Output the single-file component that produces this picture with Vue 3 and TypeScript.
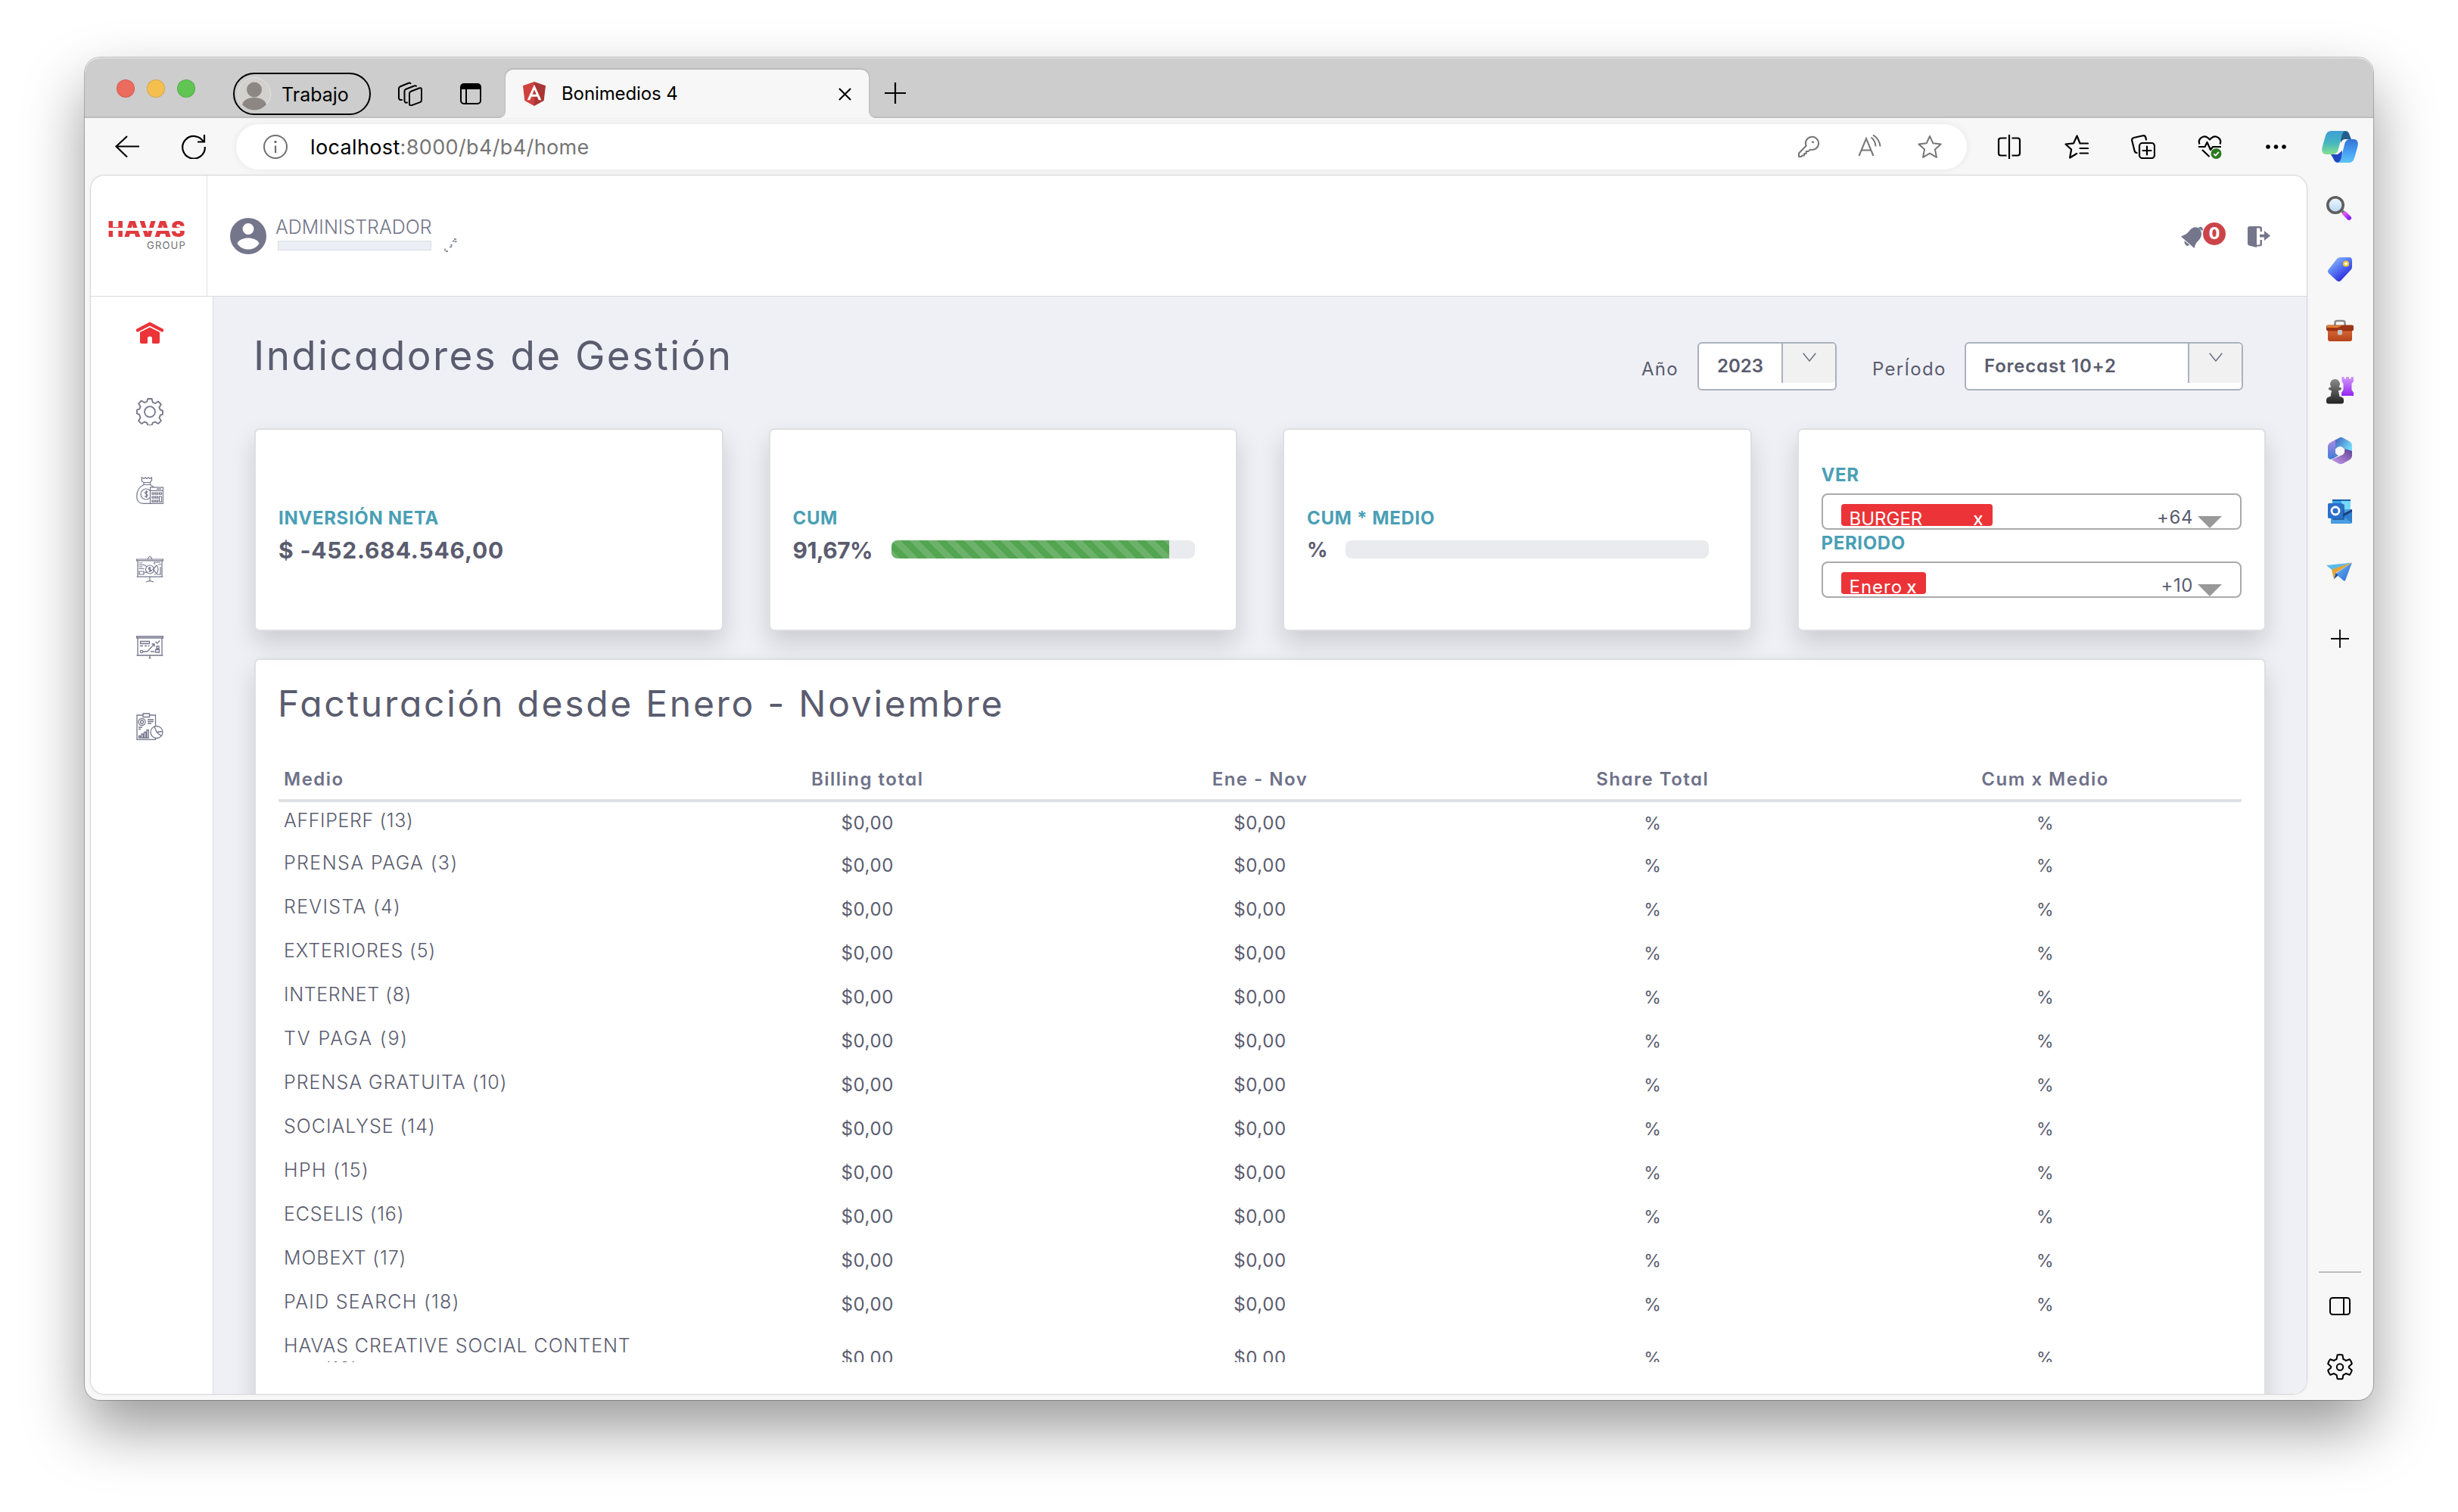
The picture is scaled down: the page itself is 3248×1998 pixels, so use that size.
<script setup lang="ts">
interface Medio {
  name: string
  tracking: number
  extra?: string
}

const medios: Medio[] = [
  { name: 'AFFIPERF (13)', tracking: 0.6 },
  { name: 'PRENSA PAGA (3)', tracking: 1.4 },
  { name: 'REVISTA (4)', tracking: 1.3 },
  { name: 'EXTERIORES (5)', tracking: 0.9 },
  { name: 'INTERNET (8)', tracking: 0.6 },
  { name: 'TV PAGA (9)', tracking: 1.9 },
  { name: 'PRENSA GRATUITA (10)', tracking: 1 },
  { name: 'SOCIALYSE (14)', tracking: 1 },
  { name: 'HPH (15)', tracking: 1.4 },
  { name: 'ECSELIS (16)', tracking: 0.8 },
  { name: 'MOBEXT (17)', tracking: 0.9 },
  { name: 'PAID SEARCH (18)', tracking: 1.3 },
  { name: 'HAVAS CREATIVE SOCIAL CONTENT', tracking: 0.9, extra: '(19)' },
]
const columns = ['Billing total', 'Ene - Nov', 'Share Total', 'Cum x Medio']
const cum = 91.67
</script>

<template>
  <div class="desktop">
    <div class="window">
      <!-- tab strip -->
      <header class="titlebar">
        <div class="lights"><i class="red"></i><i class="yellow"></i><i class="green"></i></div>
        <div class="profile">
          <svg class="profile-pic" viewBox="0 0 44 44">
            <circle cx="22" cy="22" r="21.5" fill="#d3d1cd" stroke="#e4e3e0" />
            <circle cx="22" cy="16.500" r="10" fill="#8c8782" />
            <path d="M6 36c2-6 8-9 16-9s14 3 16 9c-4 5-10 7.500-16 7.500S10 41 6 36Z" fill="#8c8782" />
          </svg>
          <span>Trabajo</span>
        </div>
        <svg class="ws" viewBox="0 0 32 32" fill="none" stroke="#000" stroke-width="2" stroke-linejoin="round" stroke-linecap="round">
          <path d="M15 15.500q0-2 2-2.800l11-4.200q3-1 3 1.800v14q0 2-2 2.800l-11 4q-3 1-3-1.800Z" />
          <path d="M12 27.500q-3.500 .8-3.500-2.500V12.500q0-2 2-2.800l11-4.200q1.500-.5 2.500.3" />
          <path d="M5 24q-4 .5-4-2.500V9q0-2 2-2.800l11-4.500q1.500-.5 2.500.5" />
        </svg>
        <svg class="tabact" viewBox="0 0 28 28">
          <rect x="1" y="1" width="26" height="26" rx="4" fill="none" stroke="#000" stroke-width="2" />
          <path d="M1 8V4q0-3 3-3h20q3 0 3 3v4Z" />
          <path d="M8 8v19" stroke="#000" stroke-width="2" />
        </svg>
        <div class="tab">
          <svg class="ng" viewBox="0 0 30 32">
            <path d="M15 0 0 5.300 2.300 25 15 32Z" fill="#d0413d" />
            <path d="M15 0l15 5.300L27.700 25 15 32Z" fill="#a83634" />
            <path d="M15 3.800 5.700 24.300h3.500l1.900-4.600h7.800l1.900 4.600h3.500Zm0 6.600 2.700 6.400h-5.400Z" fill="#fff" />
          </svg>
          <span class="tab-title">Bonimedios 4</span>
          <svg class="tab-x" viewBox="0 0 18 18" stroke="#000" stroke-width="2.200"><path d="M1 1l16 16M17 1 1 17" /></svg>
        </div>
        <svg class="newtab" viewBox="0 0 28 28" stroke="#000" stroke-width="2.200"><path d="M14 0v28M0 14h28" /></svg>
      </header>

      <!-- toolbar -->
      <div class="toolbar">
        <svg class="back" viewBox="0 0 32 32" fill="none" stroke="#000" stroke-width="2.200"><path d="M32 15.500H1.500M16 2 1.500 15.500 16 29.500" /></svg>
        <svg class="reload" viewBox="0 0 32 32" fill="none" stroke="#000" stroke-width="2.200"><path d="M29.200 10A14.800 14.800 0 1 0 30.800 16M30 0v9.500h-9" /></svg>
        <div class="address">
          <svg class="info" viewBox="0 0 32 32"><circle cx="16" cy="16" r="15" fill="none" stroke="#6f6f6f" stroke-width="2" /><path d="M16 14.500v9.500" stroke="#6f6f6f" stroke-width="2.200" /><circle cx="16" cy="9.500" r="1.700" fill="#6f6f6f" /></svg>
          <span class="url">localhost<em>:8000/b4/b4/home</em></span>
          <svg class="a-key" viewBox="0 0 32 32" fill="none" stroke="#767676" stroke-width="2" stroke-linejoin="round"><path d="M3 24.500 12.600 14.800A8.600 8.600 0 1 1 18 19.600l-2.300 2.300h-3v3h-2.600v2.600H7.500l-1.300 1.600H3Z" /><circle cx="21.500" cy="9.800" r="1.500" fill="#767676" stroke="none" /></svg>
          <svg class="a-read" viewBox="0 0 32 32" fill="none" stroke="#767676" stroke-width="2"><path d="M1.500 28 11 5l9.500 23M5 20.500h12M17.500 3.500q5.500 4 6 12M20 .5q8.500 5 9.500 15" /></svg>
          <svg class="a-star" viewBox="0 0 32 32" fill="none" stroke="#767676" stroke-width="2" stroke-linejoin="round"><path d="m16 1.800 4.300 9.500 10.300 1.200-7.700 6.900 2.100 10.400L16 24.700l-9 5.100 2.100-10.400-7.700-6.900 10.300-1.200Z" /></svg>
        </div>
        <div class="tools">
          <svg viewBox="0 0 32 32" fill="none" stroke="#000" stroke-width="2.200"><path d="M16 0v32M12.500 4.500H5q-3 0-3 3v17q0 3 3 3h7.500M19.500 4.500H27q3 0 3 3v17q0 3-3 3h-7.500" /></svg>
          <svg viewBox="0 0 32 32" fill="none" stroke="#000" stroke-width="2.200" stroke-linejoin="round" stroke-linecap="round"><path d="M20.500 11.500l-4-10-4.400 9.800L1.500 12.500l7.600 7-2 11 9-5.500M20.500 11.500H31M20.500 18H31M20.500 24.500H31" /></svg>
          <svg viewBox="0 0 32 32" fill="none" stroke="#000" stroke-width="2.200" stroke-linejoin="round" stroke-linecap="round"><rect x="11" y="11" width="20" height="20" rx="4" /><path d="M21 15.500v11M15.500 21h11M7.500 24q-2.500-.3-3-3L1.200 7.800q-.6-3 2.300-3.800l12-2.700q3-.5 3.800 2.300L20 6.500" /></svg>
          <svg viewBox="0 0 32 32" fill="none" stroke="#000" stroke-width="2.200" stroke-linejoin="round"><path d="M2.500 12.500C-.5 5 8-.5 14 4.500l2 2 2-2c6-5 14.500.5 11.500 8M1 16h8.500l3-6 4.500 10 3-4H31M6 20l9.500 9" /><circle cx="24.500" cy="25" r="7" fill="#2c7a1f" stroke="none" /><path d="m21.300 25.300 2.300 2.300 4.200-4.700" stroke="#fff" stroke-width="1.800" /></svg>
          <svg viewBox="0 0 32 32"><circle cx="5" cy="16" r="2.800" /><circle cx="15.500" cy="16" r="2.800" /><circle cx="26" cy="16" r="2.800" /></svg>
          <svg class="copilot" viewBox="0 0 48 42">
            <defs>
              <linearGradient id="cpA" x1="0" y1="0" x2="0" y2="1"><stop offset="0" stop-color="#3d9fd6" /><stop offset=".5" stop-color="#45b5c0" /><stop offset="1" stop-color="#86e08f" /></linearGradient>
              <linearGradient id="cpB" x1="0" y1="0" x2="0" y2="1"><stop offset="0" stop-color="#3272d6" /><stop offset=".6" stop-color="#49a4f4" /><stop offset="1" stop-color="#5fc4f0" /></linearGradient>
            </defs>
            <path d="M24 0h7c4 0 5 3 6 6l2 5h-8c-3 0-5 2-6 5Z" fill="#235f8c" />
            <path d="M12 31h9l6-5-1 16h-4c-4 0-6-3-7-6Z" fill="#1f49c4" />
            <path d="M12 0h20c-4 0-5 4-6 8l-4 16c-1 4-3 7-8 7H7C1 31-1 27 1 20L5 6q2-6 7-6Z" fill="url(#cpA)" />
            <path d="M36 42H20c4 0 5-4 6-8l4-16c1-4 3-7 7-7h5c5 0 7 4 5 11l-4 14q-2 6-7 6Z" fill="url(#cpB)" />
          </svg>
        </div>
      </div>

      <div class="body">
        <div class="page">
          <header class="top">
            <div class="logo">
              <span class="havas">HAVAS</span>
              <span class="group">GROUP</span>
            </div>
            <svg class="avatar" viewBox="0 0 48 48"><circle cx="24" cy="24" r="24" fill="#74768b" /><circle cx="24" cy="14.500" r="7.400" fill="#fff" /><path d="M9.500 33.500C12 28.500 18 26.500 24 26.500s12 2 14.500 7C35.500 39 30 41.500 24 41.500S12.500 39 9.500 33.500Z" fill="#fff" /></svg>
            <div class="who"><span>ADMINISTRADOR</span><i></i></div>
            <svg class="grip" viewBox="0 0 18 18" stroke="#8a8c9d" stroke-width="1.800" fill="none"><path d="M1 13.500v3.500h5M7 11.500l3.500-.5M8.500 8l2 2M11 4.500l3-2M13 1h4M14 4.500l2.500-.5" stroke-dasharray="3 1.500" /></svg>
            <div class="session">
              <svg class="bell" viewBox="0 0 30 30"><g fill="#74768b"><path d="M0 13.500C6 11 8 10 11 6 15 0 22 0 25 4s3 10-2 15c-4 4-4 5-5.500 10Z" /><path d="M4.500 19 11 24.500q-2 2.500-4.500 .5T4.500 19ZM23 2q3-2.500 5 0t0 4Z" /></g></svg>
              <b class="badge">0</b>
              <svg class="exit" viewBox="0 0 30 28"><path d="M0 2.500Q0 0 3 0h12.500Q19 0 19 3v4h-2.500V3.500q0-1-1-1H12V24.500h3.500q1 0 1-1V18H19v6q0 2.500-3.500 2.500H12V28L2 25.500Q0 25 0 23ZM16 10.800h6V6l8 6.500-8 6.500v-4.500h-6Z" fill="#74768b" /></svg>
            </div>
          </header>

          <div class="below">
            <nav class="nav">
              <svg viewBox="0 0 36 36"><path d="M18 3.500 36 13v3l-2 .8L18 8.500 2 16.800 0 16v-3Z" fill="#eb3338" /><path d="M18 10.500 31 17v13q0 2-2 2h-6.500q-1.500 0-1.500-1.500V25q0-2.500-3-2.500T15 25v5.500q0 1.500-1.500 1.500H7q-2 0-2-2V17Z" fill="#eb3338" /></svg>
              <svg viewBox="0 0 36 36" fill="none" stroke="#74768b" stroke-width="1.800" stroke-linejoin="round"><path d="M15.300 1h5.400l1 4.600 3.400 1.400 4-2.500 3.800 3.800-2.500 4 1.400 3.400 3.200 1v5l-3.200 1-1.400 3.400 2.500 4-3.800 3.800-4-2.500-3.400 1.400-1 3.200h-5.400l-1-3.200-3.400-1.400-4 2.500-3.800-3.800 2.500-4L4.200 21.700 1 20.700v-5l3.200-1 1.400-3.400-2.500-4 3.800-3.800 4 2.500 3.400-1.400Z" /><circle cx="18" cy="18.200" r="7" /></svg>
              <svg viewBox="0 0 36 36" fill="none" stroke="#74768b" stroke-width="1.200"><path d="M8 1l-1 0 .5 5 2.500 1.500h8L20.500 5V1l-2.500 1.500L16 1l-2 1.500L12 1l-2 1.500ZM10 7.500v3h8.500v-3M10 10.500C3 14 .7 20 .7 26c0 6 3 9.300 9 9.300h9M18.500 10.500l5 3.500" /><circle cx="13" cy="23" r="7" /><rect x="18.500" y="14" width="17" height="21.400" fill="#fff" /><path d="M18.500 18.300h17M27 16.200h6" /><path d="M21 21h3v2.200h-3ZM25.700 21h3v2.200h-3ZM30.500 21h3v2.200h-3ZM21 26h3v2.200h-3ZM25.700 26h3v2.200h-3ZM21 31h3v2.200h-3ZM25.700 31h3v2.200h-3ZM30.500 26h3v7.200h-3Z" /><path d="M15.500 20.500q-1.500-1.300-3-.7-1.800 1 0 2.800 3 .6 2.500 2.600-1.500 2-4 .3M13.500 18v10" /></svg>
              <svg viewBox="0 0 36 36" fill="none" stroke="#74768b" stroke-width="1.200"><path d="M.6 5h34.800v1.800H.6ZM2 7v21M34 7v21M.6 28.200h34.800M15 5q3-7 6 0M18 28.500v6M13 35.200q5-3 10 0" /><circle cx="18" cy="18.500" r="5.500" /><path d="M19.500 16.500q-3-1-3 .8t3 2-3 2M18 15v7M3.500 10h5M3.500 12.500h7M3.500 15h5M3.500 17.500h7M4 21h6v4H4ZM10 12.500l4 2M11 23l4-1.500M22 18.500l5-5.500q4 5 0 11ZM24 12V9h8M29 12h4M32 15v10h-5M24 25h2" /></svg>
              <svg viewBox="0 0 36 36" fill="none" stroke="#74768b" stroke-width="1.300"><path d="M.6 3h34.800v2H.6ZM2 5v22.500M34 5v22.500M.6 28h34.800M18 28v2.500M16.500 31.500h3" /><path d="M5.500 9.500h12v3h-12ZM5 15.500h4M11 15.500h3M15.500 15.500h2" /><circle cx="7" cy="23" r="1.700" /><path d="M9 23h5.500L24 13M20.500 13H24v3.500M25.500 10l2.200 2 3.500-3.500M19 23h5M27 16h3v3h-3ZM25.500 20.500h5V24h-5Z" /></svg>
              <svg viewBox="0 0 36 36" fill="none" stroke="#74768b" stroke-width="1.300"><path d="M9 3H1v32.300h24.500V34M17 3h8.500v14M9 1h8.500v4.500H9Z" /><circle cx="7.500" cy="12" r="4.500" /><circle cx="7.500" cy="12" r="2" /><path d="M15 9h8M15 11.500h8M15 14h5M3 19h5M3 21.500h3M3.500 33v-2.500h2V33ZM7 33v-5h2.200v5ZM10.500 33v-7.500h2.200V33ZM14 33V22.500h2.200V33Z" /><circle cx="27" cy="25.500" r="8" /><path d="M27 25.500 24 18M27 25.500l7.500-1M27 25.500l6 5" /></svg>
            </nav>

            <main class="main">
              <div class="headline">
                <h1>Indicadores de Gestión</h1>
                <div class="filters">
                  <label>Año</label>
                  <div class="select year"><span class="sel-text">2023</span><span class="sel-btn"><svg viewBox="0 0 18 12" fill="none" stroke="#6c6f84" stroke-width="1.500"><path d="M.7.7 9 11 17.300.7" /></svg></span></div>
                  <label class="lp">PerÍodo</label>
                  <div class="select period"><span class="sel-text">Forecast 10+2</span><span class="sel-btn"><svg viewBox="0 0 18 12" fill="none" stroke="#6c6f84" stroke-width="1.500"><path d="M.7.7 9 11 17.300.7" /></svg></span></div>
                </div>
              </div>

              <div class="kpis">
                <section class="card kpi">
                  <h2>INVERSIÓN NETA</h2>
                  <div class="line"><strong>$ -452.684.546,00</strong></div>
                </section>
                <section class="card kpi">
                  <h2>CUM</h2>
                  <div class="line"><strong class="v-cum">91,67%</strong><div class="bar b-cum"><div class="fill" :style="{ width: cum + '%' }"></div></div></div>
                </section>
                <section class="card kpi">
                  <h2>CUM * MEDIO</h2>
                  <div class="line"><strong class="v-med">%</strong><div class="bar b-med"></div></div>
                </section>
                <section class="card picks">
                  <h2>VER</h2>
                  <div class="multi">
                    <div class="chip c-ver"><div class="chip-in"><span>BURGER</span><span class="x">x</span></div></div>
                    <span class="more">+64</span><i class="tri"></i>
                  </div>
                  <h2>PERIODO</h2>
                  <div class="multi">
                    <div class="chip c-per"><div class="chip-in"><span>Enero</span><span class="x">x</span></div></div>
                    <span class="more">+10</span><i class="tri"></i>
                  </div>
                </section>
              </div>

              <section class="card billing">
                <h1>Facturación desde Enero - Noviembre</h1>
                <div class="thead">
                  <div class="name">Medio</div>
                  <div v-for="c in columns" :key="c" class="num">{{ c }}</div>
                </div>
                <div class="tbody">
                  <div v-for="m in medios" :key="m.name" class="row">
                    <div class="name" :style="{ letterSpacing: m.tracking + 'px' }">{{ m.name }}<span v-if="m.extra" class="extra">{{ m.extra }}</span></div>
                    <div class="num">$0,00</div>
                    <div class="num">$0,00</div>
                    <div class="num pct">%</div>
                    <div class="num pct">%</div>
                  </div>
                </div>
              </section>
            </main>
          </div>
        </div>

        <!-- browser side bar -->
        <aside class="edge">
          <svg viewBox="0 0 40 40"><defs><linearGradient id="glass" x1="0" y1="0" x2="0" y2="1"><stop offset="0" stop-color="#f2f8fe" /><stop offset="1" stop-color="#b5d6f5" /></linearGradient><linearGradient id="hndl" x1="0" y1="0" x2="1" y2="1"><stop offset="0" stop-color="#e055e8" /><stop offset="1" stop-color="#8b22f5" /></linearGradient></defs><path d="m23 23 6 6" stroke="#6b6b6b" stroke-width="4" /><circle cx="14" cy="15" r="10.200" fill="url(#glass)" stroke="#5f5f5f" stroke-width="3.600" /><path d="m26.500 26.500 5.500 5.500" stroke="url(#hndl)" stroke-width="6" stroke-linecap="round" /></svg>
          <svg viewBox="0 0 40 40"><defs><linearGradient id="tg" x1=".2" y1=".1" x2=".8" y2=".9"><stop offset="0" stop-color="#86b4f8" /><stop offset=".5" stop-color="#4f6cf2" /><stop offset="1" stop-color="#2a20d8" /></linearGradient></defs><path d="M20 4h12q4 0 4 4v9q0 2-2 4L21 35q-2.500 2-5 0L5 25q-2-2.500 0-5L16 6q2-2 4-2Z" fill="url(#tg)" /><circle cx="28" cy="12.500" r="3" fill="#fff" stroke="#f3c72d" stroke-width="2.200" /></svg>
          <svg viewBox="0 0 40 40"><defs><linearGradient id="bf" x1="0" y1="0" x2="0" y2="1"><stop offset="0" stop-color="#d96a35" /><stop offset="1" stop-color="#b5431c" /></linearGradient></defs><path d="M13.500 14v-3.500q0-2.500 2.500-2.500h8q2.500 0 2.500 2.500V14" fill="none" stroke="#8a8a8a" stroke-width="2.600" /><path d="M4 19h32v13q0 3-3 3H7q-3 0-3-3Z" fill="url(#bf)" /><path d="M4 13.500h32q2 0 2 2V19q0 2.500-3 2.500H5Q2 21.500 2 19v-3.500q0-2 2-2Z" fill="#9c3516" /><path d="M3 14h20l-6 3H2.500Z" fill="#e08033" /><rect x="17" y="20" width="6" height="6.500" rx="1" fill="#c4c4c4" /></svg>
          <svg viewBox="0 0 40 40"><defs><linearGradient id="pawn" x1="0" y1="0" x2="0" y2="1"><stop offset="0" stop-color="#8b8b8b" /><stop offset="1" stop-color="#222" /></linearGradient><linearGradient id="rook" x1="0" y1="0" x2="0" y2="1"><stop offset="0" stop-color="#d29bfa" /><stop offset="1" stop-color="#9424f0" /></linearGradient></defs><path d="M22.500 2h3v2.500H28V2h4v2.500h2.500V2h3.500v6l-2.500 3v8l2.500 4v4H22v-4l2.500-4v-8L22.500 8Z" fill="url(#rook)" /><path d="M13.500 5a6.500 6.500 0 0 1 5 10.500q3.500 0 3.500 2t-4 2.500l1.500 8q5.500.5 5.500 4.500v2q0 3-3 3H5q-3 0-3-3v-2q0-4 5.500-4.500L9 20q-4-.5-4-2.500t3.500-2A6.500 6.500 0 0 1 13.500 5Z" fill="url(#pawn)" /></svg>
          <svg viewBox="0 0 40 40"><defs><linearGradient id="m1" x1="0" y1="0" x2="0" y2="1"><stop offset="0" stop-color="#b08be0" /><stop offset="1" stop-color="#3d7bd8" /></linearGradient><linearGradient id="m2" x1="0" y1="0" x2="1" y2=".6"><stop offset="0" stop-color="#4262bd" /><stop offset="1" stop-color="#74dcfb" /></linearGradient><linearGradient id="m3" x1="1" y1="0" x2="0" y2="1"><stop offset="0" stop-color="#5b4291" /><stop offset="1" stop-color="#cc9cee" /></linearGradient></defs><path d="M15 4.500 7 9q-3 2-3 5.500v12Q4 30 7 31l4-1 7-4-4-3V9Z" fill="url(#m1)" /><path d="M14 5.500 20 2q2-.6 4 .5l9 5q3 2 3 5.500V22l-10-4.500L21 14l-7 3Z" fill="url(#m2)" /><path d="M36 20v6.500q0 3-3 5l-9 5q-3 1.500-6 0L9 31.500l11-5 5.500-3.500 1-6Z" fill="url(#m3)" /><circle cx="20" cy="20" r="6" fill="#f7f7f7" /></svg>
          <svg viewBox="0 0 40 40"><rect x="10" y="4" width="24" height="18" rx="1.500" fill="#35a6e6" /><path d="M10 4h24v2H10Z" fill="#1d5fa6" /><rect x="22" y="6" width="12" height="11" fill="#76d8fb" /><path d="M8 17h28v17q0 2-2 2H8Z" fill="#4a9de0" /><path d="M36 18 24 26l12 9Z" fill="#2f7fd0" /><path d="M36 17v3l-12 7v-4Z" fill="#1a3f7c" /><path d="M10 10h14q2 0 2 2v19H10Z" fill="#134d8f" opacity=".7" /><rect x="4" y="9" width="20" height="20" rx="2" fill="#2a6fcc" /><circle cx="14" cy="19" r="5" fill="none" stroke="#fff" stroke-width="2.800" /></svg>
          <svg viewBox="0 0 40 40"><defs><linearGradient id="pl" x1="0" y1="0" x2="1" y2="1"><stop offset="0" stop-color="#6fc0ee" /><stop offset="1" stop-color="#2c63d8" /></linearGradient></defs><path d="M2 11 36 7.500 10 17.500Z" fill="#5bbcec" /><path d="m14 22 22-14.500L27 31q-1 1-2 .5Z" fill="url(#pl)" /><path d="M12 29.500 14 21l4 3Z" fill="#2450ad" /><path d="M36 7.500 9 16.500l3 13L14.500 21Z" fill="#e3a537" /></svg>
          <svg class="plus" viewBox="0 0 40 40" stroke="#000" stroke-width="1.800"><path d="M20 8v24M8 20h24" /></svg>
          <i class="rule"></i>
          <svg viewBox="0 0 40 40" fill="none" stroke="#000" stroke-width="2"><rect x="7" y="9" width="26" height="22" rx="3.500" /><path d="M25 9v22" /></svg>
          <svg viewBox="0 0 40 40" fill="none" stroke="#000" stroke-width="2" stroke-linejoin="round"><path d="M16.600 4.500q3.400-.8 6.800 0l1 5.500q2 .8 3.400 2l5-1.800q2.500 2.800 3 6l-4 3.500v1.600l4 3.500q-.8 3.400-3 6l-5-1.800q-1.500 1.200-3.400 2l-1 5q-3.400.6-6.800 0l-1-5q-1.900-.8-3.400-2l-5 1.800q-2.300-2.600-3-6l4-3.500v-1.600l-4-3.500q.7-3.200 3-6l5 1.800q1.400-1.200 3.400-2Z" /><circle cx="20" cy="20.500" r="4.200" /></svg>
        </aside>
      </div>
    </div>
  </div>
</template>

<style>
body { background: #fff; }
</style>

<style scoped>
* { box-sizing: border-box; }
h1, h2 { margin: 0; }
svg { display: block; flex: none; }
i { display: block; }
.desktop { width: 3248px; height: 1998px; padding: 76px 112px 0; overflow: hidden; background: #fff; font-family: Inter, "Open Sans", sans-serif; }
.window { width: 3024px; height: 1774px; border-radius: 20px; background: #f7f7f7; display: flex; flex-direction: column; box-shadow: 0 0 0 1px rgba(0,0,0,.24), 0 38px 80px rgba(0,0,0,.4); }

.titlebar { height: 80px; background: #cdcdcd; border-radius: 20px 20px 0 0; display: flex; align-items: flex-start; padding-left: 42px; box-shadow: inset 0 1px 0 #f1f1f1, inset 0 -3px 3px -2px rgba(0,0,0,.14); flex: none; }
.lights { display: flex; gap: 16px; margin-top: 29px; }
.lights i { width: 24px; height: 24px; border-radius: 50%; border: 1px solid rgba(0,0,0,.12); }
.red { background: #ed6a5e; }
.yellow { background: #f5bf4f; }
.green { background: #61c554; }
.profile { margin: 20px 0 0 50px; width: 182px; height: 56px; border: 2px solid #000; border-radius: 28px; display: flex; align-items: center; font-size: 25px; color: #000; padding-left: 4px; }
.profile-pic { width: 44px; height: 44px; margin-right: 14px; }
.profile span { padding-top: 1px; }
.ws { width: 32px; height: 32px; margin: 32px 0 0 36px; }
.tabact { width: 28px; height: 28px; margin: 34px 0 0 50px; }
.tab { position: relative; margin: 16px 0 0 32px; width: 480px; height: 64px; background: #f7f7f7; border-radius: 10px 10px 0 0; display: flex; align-items: center; padding-left: 23px; box-shadow: 0 -1px 3px rgba(0,0,0,.18); }
.tab::before, .tab::after { content: ""; position: absolute; bottom: 0; width: 8px; height: 8px; }
.tab::before { left: -8px; background: radial-gradient(circle at 0 0, transparent 7.500px, #f7f7f7 8px); }
.tab::after { right: -8px; background: radial-gradient(circle at 100% 0, transparent 7.500px, #f7f7f7 8px); }
.ng { width: 30px; height: 32px; }
.tab-title { font-size: 24px; line-height: 30px; margin-left: 21px; width: 366px; letter-spacing: -.1px; white-space: nowrap; }
.tab-x { width: 17px; height: 17px; margin-top: 1px; }
.newtab { width: 28px; height: 28px; margin: 33px 0 0 21px; }

.toolbar { height: 76px; flex: none; display: flex; align-items: center; padding-left: 40px; }
.back, .reload { width: 32px; height: 32px; }
.reload { margin-left: 56px; }
.address { margin-left: 40px; width: 2287px; height: 60px; border-radius: 30px; background: #fff; box-shadow: 0 0 10px rgba(0,0,0,.07); display: flex; align-items: center; padding: 0 33px 0 36px; }
.info { width: 32px; height: 32px; }
.url { margin: 1px auto 0 30px; font-size: 27px; line-height: 34px; color: #000; letter-spacing: .36px; white-space: nowrap; }
.url em { font-style: normal; color: #757575; }
.a-key, .a-read, .a-star { width: 32px; height: 32px; }
.a-read { margin: 0 47px 0 49px; }
.tools { display: flex; align-items: center; margin-left: 40px; }
.tools svg { width: 32px; height: 32px; margin-right: 56px; }
.tools svg:first-child { margin-right: 57px; }
.tools svg:nth-child(5) { margin-right: 44px; }
.tools .copilot { width: 48px; height: 42px; margin: 0; }

.body { display: flex; flex: 1; min-height: 0; padding-left: 8px; }
.page { width: 2928px; height: 1610px; border-radius: 18px; background: #fff; overflow: hidden; box-shadow: 0 0 0 1px rgba(0,0,0,.1), 0 0 4px rgba(0,0,0,.08); display: flex; flex-direction: column; flex: none; }
.top { height: 160px; flex: none; border-bottom: 1px solid #dadbdf; display: flex; }
.logo { width: 154px; border-right: 1px solid #dfe0e2; display: flex; flex-direction: column; align-items: flex-end; padding: 57px 28px 0 0; }
.havas { font-weight: 900; font-size: 28px; line-height: 28px; height: 28px; letter-spacing: .4px; white-space: nowrap; color: transparent; background: linear-gradient(#e0393e 0 12px, #fff 12px 16px, #e0393e 16px); -webkit-background-clip: text; background-clip: text; }
.group { font-size: 13px; line-height: 16px; margin-top: -1px; color: #6f7074; letter-spacing: 1.2px; margin-right: -1px; }
.avatar { width: 48px; height: 48px; margin: 56px 0 0 30px; }
.who { margin: 51px 0 0 12px; width: 207px; color: #74768b; font-size: 25px; line-height: 34px; font-weight: 300; white-space: nowrap; }
.who i { width: 203px; height: 13px; margin: 1px 0 0 3px; background: #ebeef4; border: 1px solid #dcdee1; }
.grip { width: 18px; height: 18px; margin: 83px 0 0 16px; }
.session { display: flex; margin-left: auto; padding-right: 48px; }
.bell { width: 30px; height: 30px; margin-top: 67px; }
.badge { width: 30px; height: 30px; margin: 62px 29px 0 -1px; border-radius: 50%; background: #cb444a; color: #fff; font: 800 21px/30px Inter, sans-serif; text-align: center; }
.exit { width: 30px; height: 28px; margin-top: 67px; }

.below { flex: 1; display: flex; min-height: 0; }
.nav { width: 162px; border-right: 1px solid #dadbdf; padding: 30px 0 0 60px; display: flex; flex-direction: column; gap: 68px; flex: none; }
.nav svg { width: 36px; height: 36px; }
.main { flex: 1; background: #eff0f6; padding: 0 54px 0 54px; overflow: hidden; color: #5a5c6f; font-feature-settings: "cv11"; }
h1 { font-weight: 400; white-space: nowrap; }
.headline { height: 174px; display: flex; justify-content: space-between; padding-right: 30px; }
.headline h1 { font-size: 53px; line-height: 60px; padding-top: 48px; margin-left: -1px; letter-spacing: 2.400px; }
.filters { display: flex; padding-top: 60px; font-size: 24px; }
.filters label { line-height: 32px; margin-top: 20px; width: 74px; letter-spacing: 1.300px; }
.filters .lp { margin-left: 47px; width: 122px; }
.select { height: 64px; border: 2px solid #aab2bd; border-radius: 6px; background: #fff; display: flex; color: #5a5c6f; }
.year { width: 184px; }
.period { width: 368px; }
.sel-text { flex: 1; padding: 13px 0 0 24px; font-weight: 600; line-height: 34px; white-space: nowrap; }
.period .sel-text { letter-spacing: .8px; }
.sel-btn { width: 71px; height: 52px; background: #f1f1f1; border-left: 2px solid #aab2bd; border-radius: 0 4px 4px 0; padding: 12px 0 0 26px; }
.sel-btn svg { width: 18px; height: 12px; }

.kpis { display: grid; grid-template-columns: repeat(4, 1fr); gap: 60px; }
.card { background: #fff; border: 2px solid #dedfe2; border-radius: 7px; box-shadow: 0 16px 32px rgba(0,0,0,.15); }
.kpi, .picks { height: 268px; }
.kpi { padding: 99px 0 0 30px; }
h2 { font-size: 24px; line-height: 36px; font-weight: 700; color: #4a9fb5; letter-spacing: .650px; white-space: nowrap; }
.line { display: flex; align-items: center; margin-top: 2px; height: 44px; }
.line strong { font-size: 30px; line-height: 44px; font-weight: 700; letter-spacing: .820px; white-space: nowrap; }
.line .v-cum { width: 130px; letter-spacing: -.600px; }
.line .v-med { width: 51px; font-size: 27px; letter-spacing: 0; }
.bar { height: 24px; border-radius: 8px; background: #eaebef; overflow: hidden; margin-top: -2px; }
.b-cum { width: 401px; }
.b-med { width: 480px; }
.fill { height: 100%; background: linear-gradient(45deg, rgba(255,255,255,.15) 25%, transparent 25% 50%, rgba(255,255,255,.15) 50% 75%, transparent 75%) 0 0 / 24px 24px #53a551; }

.picks { padding: 42px 30px 0 30px; }
.multi { height: 48px; margin: 6px 0 0; border: 2px solid #aaa; border-radius: 8px; display: flex; padding: 12px 24px 0 24px; font-size: 24px; overflow: hidden; }
.chip { height: 29px; border-radius: 4px; background: #eb3338; color: #fff; padding-left: 11px; }
.c-ver { width: 200px; }
.c-per { width: 112px; letter-spacing: 1px; }
.chip-in { height: 28px; overflow: hidden; display: flex; justify-content: space-between; padding: 3px 12px 0 0; line-height: 34px; }
.x { font-weight: 500; letter-spacing: 0; }
.more { margin-left: auto; line-height: 34px; letter-spacing: .6px; padding-top: 1px; }
.tri { width: 0; height: 0; margin: 16px 0 0 6px; border: 16px solid transparent; border-top-color: #999; border-bottom: 0; }

.billing { margin-top: 36px; height: 1100px; padding: 30px 30px 0 30px; }
.billing h1 { font-size: 48px; line-height: 56px; letter-spacing: 2.720px; margin-left: -1px; }
.thead { display: flex; margin-top: 55px; height: 47px; border-bottom: 4px solid #dee2e6; font-size: 24px; line-height: 34px; font-weight: 600; letter-spacing: 1.500px; color: #6e7189; }
.thead > div, .row > div { width: 20%; white-space: nowrap; }
.thead .name { padding-left: 7px; }
.num { text-align: center; }
.tbody { height: 740px; overflow: hidden; }
.row { display: flex; height: 58px; font-size: 24px; line-height: 34px; letter-spacing: .600px; }
.row:first-child { height: 56px; }
.row .name { padding: 7px 0 0 7px; font-size: 25px; font-weight: 300; }
.row .num { padding-top: 11px; }
.row .pct { font-size: 23px; }
.row:last-child .num { padding-top: 24px; }
.extra { display: block; padding-left: 53px; margin-top: -3px; }

.edge { width: 88px; display: flex; flex-direction: column; align-items: center; gap: 40px; padding: 24px 0 24px; height: 1618px; }
.edge svg { width: 40px; height: 40px; }
.edge .plus { margin-top: 8px; }
.rule { width: 56px; height: 2px; background: #bdbdbd; margin: auto 0 -16px; }
</style>
